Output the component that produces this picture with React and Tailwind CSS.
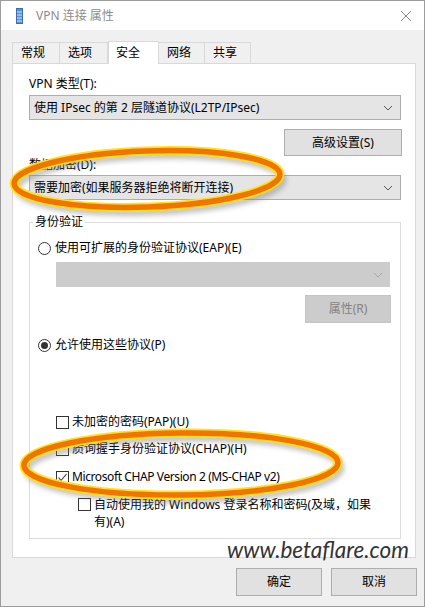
import React from 'react';

const Chevron = ({ color = '#555' }) => (
  <svg width="10" height="6" viewBox="0 0 10 6">
    <polyline points="1,1 5,5 9,1" fill="none" stroke={color} strokeWidth="1" />
  </svg>
);

const Select = ({ text, className = '' }) => (
  <div className={`flex items-center justify-between h-[25px] border border-[#adadad] bg-[#e5e5e5] pl-[4px] pr-[7px] ${className}`}>
    <span className="leading-[16px]">{text}</span>
    <Chevron />
  </div>
);

const Radio = ({ checked, label }) => (
  <div className="flex items-center h-[16px] gap-[4px]">
    <span className="w-[13px] h-[13px] rounded-full border border-[#333] bg-white flex items-center justify-center">
      {checked && <span className="w-[7px] h-[7px] rounded-full bg-[#333]" />}
    </span>
    <span className="leading-[16px]">{label}</span>
  </div>
);

const Check = ({ checked }) => (
  <span className="w-[13px] h-[13px] shrink-0 border border-[#333] bg-white flex items-center justify-center">
    {checked && (
      <svg width="11" height="11" viewBox="0 0 11 11">
        <polyline points="1.5,5.5 4,8.5 9.5,2" fill="none" stroke="#333" strokeWidth="1.1" />
      </svg>
    )}
  </span>
);

const CheckRow = ({ checked, label, className = '', textClass = '' }) => (
  <div className={`flex items-center h-[16px] gap-[3px] ${className}`}>
    <Check checked={checked} />
    <span className={`leading-[16px] whitespace-nowrap ${textClass}`}>{label}</span>
  </div>
);

const tabs = [
  { label: '常规', w: 'w-[48px]' },
  { label: '选项', w: 'w-[48px]' },
  { label: '安全', w: 'w-[51px]', active: true },
  { label: '网络', w: 'w-[46px]' },
  { label: '共享', w: 'w-[46px]' },
];

// orange highlight rings drawn over the dialog
const Ring = ({ cx, cy, rx, ry, rot }) => (
  <g transform={`rotate(${rot} ${cx} ${cy})`}>
    <ellipse cx={cx + 3} cy={cy + 5} rx={rx} ry={ry} fill="none" stroke="#777" strokeOpacity="0.45" strokeWidth="7" filter="url(#blur)" />
    <ellipse cx={cx} cy={cy} rx={rx} ry={ry} fill="none" stroke="#ffe21a" strokeWidth="9" />
    <ellipse cx={cx} cy={cy} rx={rx} ry={ry} fill="none" stroke="#f27400" strokeWidth="5.5" />
  </g>
);

export default function App() {
  return (
    <div className="relative w-[425px] h-[607px] overflow-hidden bg-[#f0f0f0] border border-[#9c9c9c] text-[12px] text-black font-['Noto_Sans','Noto_Sans_CJK_SC',sans-serif]">
      {/* title bar */}
      <div className="h-[29px] bg-white flex items-center">
        <svg className="ml-[15px]" width="7" height="16" viewBox="0 0 7 16">
          <rect x="0.5" y="0.5" width="6" height="15" fill="#5b8fd0" stroke="#3a6fb5" />
          <line x1="1" y1="4" x2="6" y2="4" stroke="#d6e6f7" />
          <line x1="1" y1="7" x2="6" y2="7" stroke="#d6e6f7" />
          <line x1="1" y1="10" x2="6" y2="10" stroke="#d6e6f7" />
          <line x1="1" y1="13" x2="6" y2="13" stroke="#d6e6f7" />
        </svg>
        <span className="ml-[13px] text-[#8c8c8c] leading-[16px]">VPN 连接 属性</span>
        <svg className="ml-auto mr-[12px]" width="12" height="12" viewBox="0 0 12 12">
          <path d="M1 1 L11 11 M11 1 L1 11" stroke="#8a8a8a" strokeWidth="1" />
        </svg>
      </div>

      {/* tabs */}
      <div className="flex items-end ml-[11px] mt-[10px] h-[23px]">
        {tabs.map((t) =>
          t.active ? (
            <div key={t.label} className={`${t.w} h-[23px] -mb-[1px] relative z-10 bg-white border border-b-0 border-[#d9d9d9] pl-[7px] pt-[3px] leading-[16px]`}>
              {t.label}
            </div>
          ) : (
            <div key={t.label} className={`${t.w} h-[21px] border border-l-0 first:border-l border-b-0 border-[#d9d9d9] bg-[#f0f0f0] pl-[8px] pt-[2px] leading-[16px]`}>
              {t.label}
            </div>
          )
        )}
      </div>

      {/* tab page */}
      <div className="ml-[11px] w-[404px] h-[495px] bg-white border border-[#d9d9d9] pl-[16px] pt-[12px] flex flex-col">
        <div className="leading-[16px]">VPN 类型(T):</div>
        <Select className="mt-[3px] w-[372px]" text="使用 IPsec 的第 2 层隧道协议(L2TP/IPsec)" />
        <div className="w-[373px] flex justify-end mt-[9px]">
          <button className="w-[118px] h-[27px] bg-[#e1e1e1] border border-[#adadad]">高级设置(S)</button>
        </div>
        <div className="leading-[16px] mt-[1px]">数据加密(D):</div>
        <Select className="mt-[2px] w-[372px]" text="需要加密(如果服务器拒绝将断开连接)" />

        <fieldset className="mt-[14px] w-[372px] h-[325px] border border-[#dcdcdc] flex flex-col">
          <legend className="ml-[3px] px-[2px] leading-[16px]">身份验证</legend>
          <div className="ml-[8px] mt-[10px]">
            <Radio label="使用可扩展的身份验证协议(EAP)(E)" />
          </div>
          <div className="ml-[26px] mt-[6px] w-[334px] h-[25px] bg-[#cccccc] border border-[#cccccc] flex items-center justify-end pr-[6px]">
            <Chevron color="#a8a8a8" />
          </div>
          <div className="w-[361px] flex justify-end mt-[8px]">
            <button className="w-[86px] h-[28px] bg-[#cccccc] border border-[#c4c4c4] text-[#838383]">属性(R)</button>
          </div>
          <div className="ml-[8px] mt-[14px]">
            <Radio checked label="允许使用这些协议(P)" />
          </div>
          <CheckRow className="ml-[26px] mt-[61px]" label="未加密的密码(PAP)(U)" />
          <CheckRow className="ml-[26px] mt-[11px]" label="质询握手身份验证协议(CHAP)(H)" />
          <CheckRow className="ml-[26px] mt-[12px]" textClass="tracking-[-0.4px]" checked label="Microsoft CHAP Version 2 (MS-CHAP v2)" />
          <div className="ml-[48px] mt-[11px] flex items-start gap-[3px]">
            <span className="mt-[2px]"><Check /></span>
            <span className="leading-[17px]">
              自动使用我的 Windows 登录名称和密码(及域，如果
              <br />
              有)(A)
            </span>
          </div>
        </fieldset>
      </div>

      {/* dialog buttons */}
      <div className="flex justify-end gap-[9px] mr-[7px] mt-[10px]">
        <button className="w-[86px] h-[28px] bg-[#e1e1e1] border border-[#adadad]">确定</button>
        <button className="w-[86px] h-[28px] bg-[#e1e1e1] border border-[#adadad]">取消</button>
      </div>

      {/* watermark */}
      <div className="absolute left-[226px] top-[536px] text-[22.5px] italic text-[#333] leading-[26px] font-['Lato',sans-serif]">
        www.betaflare.com
      </div>

      {/* highlight rings */}
      <svg className="absolute inset-0 pointer-events-none" width="425" height="607">
        <defs>
          <filter id="blur" x="-20%" y="-50%" width="140%" height="200%">
            <feGaussianBlur stdDeviation="2.5" />
          </filter>
        </defs>
        <Ring cx={146} cy={178} rx={133} ry={28} rot={-2} />
        <Ring cx={180} cy={463} rx={157} ry={31} rot={-0.5} />
      </svg>
    </div>
  );
}
